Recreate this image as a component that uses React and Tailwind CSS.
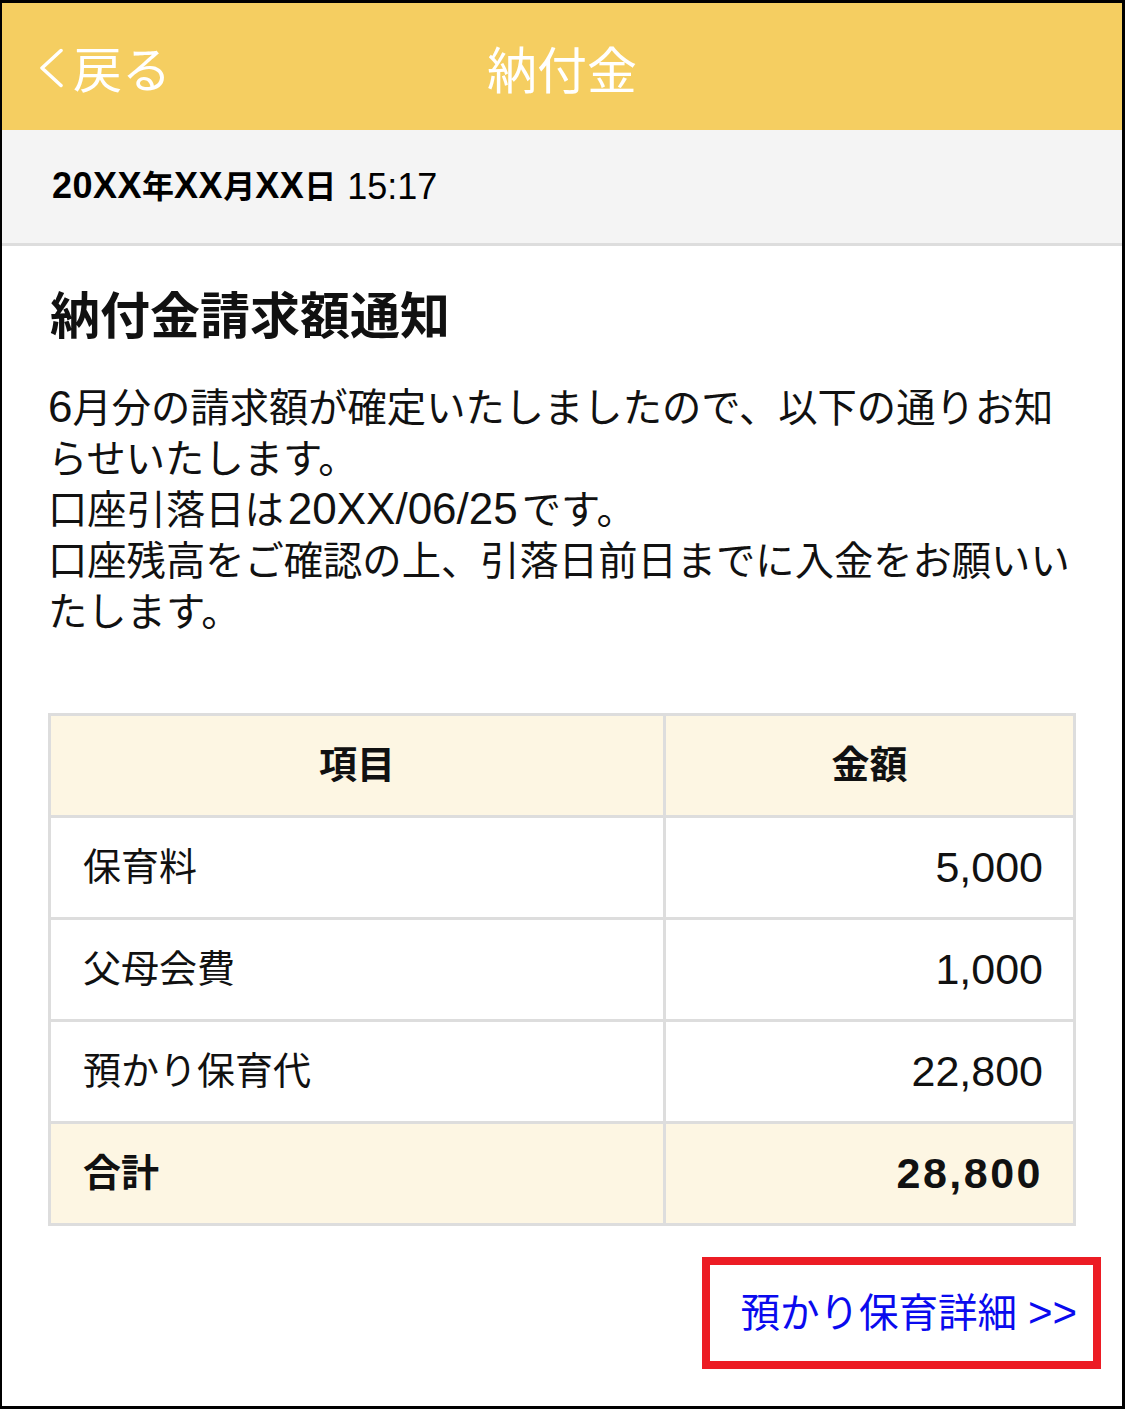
const Latin = ({ children, className = "" }) => (
  <span className={`font-['Liberation_Sans',sans-serif] leading-none ${className}`}>{children}</span>
)

const rows = [
  { label: "保育料", amount: "5,000" },
  { label: "父母会費", amount: "1,000" },
  { label: "預かり保育代", amount: "22,800" },
]

const App = () => {
  return (
    <div className="w-[1125px] h-[1409px] bg-white border-black border-t-[3px] border-b-[3px] border-l-2 border-r-[3px] flex flex-col font-['Liberation_Sans','Noto_Sans_CJK_JP',sans-serif] text-[#111]">
      {/* header */}
      <div className="h-[127px] bg-[#F5CE61] grid grid-cols-[1fr_auto_1fr] items-center text-white">
        <div className="flex items-center pl-[37px]">
          <svg width="24" height="40" viewBox="0 0 24 40" className="mt-[3px]">
            <polyline points="22,2.5 3,20 22,37.5" fill="none" stroke="white" strokeWidth="3.5" strokeLinecap="round" strokeLinejoin="round" />
          </svg>
          <span className="ml-[10px] text-[49px] leading-none font-['Noto_Sans_CJK_JP',sans-serif] font-normal">戻る</span>
        </div>
        <h1 className="text-[50px] leading-none font-['Noto_Sans_CJK_JP',sans-serif] font-normal">納付金</h1>
        <div />
      </div>

      {/* date bar */}
      <div className="h-[116px] bg-[#F4F4F4] border-b-[3px] border-[#DDDDDD] flex items-center pl-[50px] text-[32px] text-black">
        <span className="font-bold">
          <Latin className="text-[36px] tracking-[0.5px]">20XX</Latin>年<Latin className="text-[36px] tracking-[0.5px]">XX</Latin>月<Latin className="text-[36px] tracking-[0.5px]">XX</Latin>日
        </span>
        <Latin className="text-[36px] ml-[11px]">15:17</Latin>
      </div>

      {/* body */}
      <div className="flex flex-col px-[46px] pt-[41px]">
        <h2 className="text-[50px] leading-[60px] font-bold text-[#111] pl-[2px]">納付金請求額通知</h2>

        <p className="mt-[36px] text-[39.3px] leading-[51px] text-[#111]">
          <Latin className="text-[44px]">6</Latin>月分の請求額が確定いたしましたので、以下の通りお知らせいたします。
          <br />
          口座引落日は<Latin className="text-[44px] mx-[4px]">20XX/06/25</Latin>です。
          <br />
          口座残高をご確認の上、引落日前日までに入金をお願いいたします。
        </p>

        {/* table */}
        <div className="mt-[75px] border-[3px] border-[#DDDDDD] flex flex-col">
          <div className="h-[99px] flex bg-[#FDF6E3] font-bold text-[38px]">
            <div className="w-[615px] border-r-[3px] border-[#DDDDDD] flex items-center justify-center">項目</div>
            <div className="flex-1 flex items-center justify-center">金額</div>
          </div>
          {rows.map((r) => (
            <div key={r.label} className="h-[102px] flex border-t-[3px] border-[#DDDDDD] text-[38px]">
              <div className="w-[615px] border-r-[3px] border-[#DDDDDD] flex items-center pl-[32px]">{r.label}</div>
              <div className="flex-1 flex items-center justify-end pr-[30px]">
                <Latin className="text-[43px]">{r.amount}</Latin>
              </div>
            </div>
          ))}
          <div className="h-[102px] flex border-t-[3px] border-[#DDDDDD] bg-[#FDF6E3] font-bold text-[38px]">
            <div className="w-[615px] border-r-[3px] border-[#DDDDDD] flex items-center pl-[32px]">合計</div>
            <div className="flex-1 flex items-center justify-end pr-[30px]">
              <Latin className="text-[43px] tracking-[2.5px]">28,800</Latin>
            </div>
          </div>
        </div>

        {/* link */}
        <div className="flex justify-end mt-[31px] mr-[-25px]">
          <div className="w-[399px] h-[112px] border-8 border-[#EC1C24] flex items-center justify-end pr-[16px]">
            <a href="#" className="text-[39.5px] text-[#0A0AEE] leading-none">
              預かり保育詳細 <Latin className="text-[42px]">&gt;&gt;</Latin>
            </a>
          </div>
        </div>
      </div>
    </div>
  )
}

export default App
